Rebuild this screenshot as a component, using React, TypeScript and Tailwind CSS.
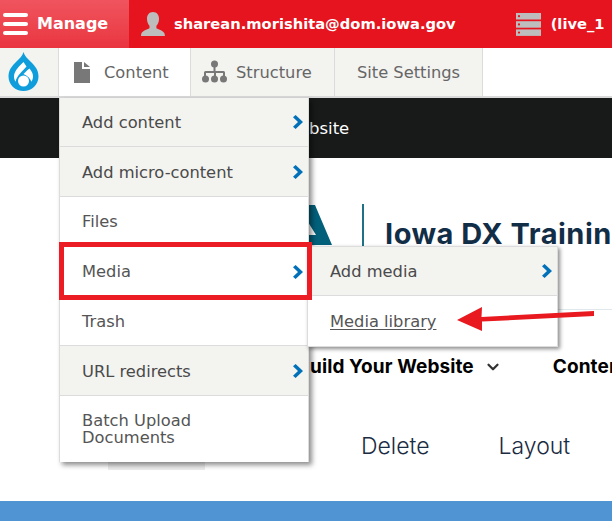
import { ChevronDown } from "lucide-react";

const verdana = "font-['DejaVu_Sans',Verdana,sans-serif]";

function Arrow() {
  return (
    <svg className="absolute right-[5px] top-1/2 -translate-y-1/2" width="10" height="14" viewBox="0 0 10 14" fill="#0071b8">
      <path d="M0 2.200L2.600 0 10 7l-7.400 7L0 11.800 5 7z" />
    </svg>
  );
}

function MenuItem({
  label,
  shaded,
  arrow,
  underline,
  className = "h-[50px]",
}: {
  label: string;
  shaded?: boolean;
  arrow?: boolean;
  underline?: boolean;
  className?: string;
}) {
  return (
    <div
      className={`relative flex items-center border-b border-[#dcdcdc] pl-[22px] pr-10 text-[16.300px] leading-[17px] last:border-b-0 ${className} ${
        shaded ? "bg-[#f3f3f0] text-[#4a4a4a]" : "bg-white text-[#555]"
      } ${underline ? "underline underline-offset-2" : ""}`}
    >
      <span>{label}</span>
      {arrow && <Arrow />}
    </div>
  );
}

function DrupalLogo() {
  return (
    <svg width="31" height="40" viewBox="0 0 31 40">
      <path
        d="M15.500 0c1 4 4 6.500 7.500 10 4 4 7.500 8 7.500 14.500C30.500 33 23.500 39 15.500 39S.5 33 .5 24.500C.5 18 4 14 8 10c3.500-3.500 6.500-6 7.500-10z"
        fill="#0f9edb"
      />
      <path
        d="M15.500 10c-3 3-9.500 8.500-9.500 14.500 0 2 .6 3.800 1.600 5.200 .4-5 7.900-11.700 10.900-15.200 -1-1.600-2-3-3-4.500z"
        fill="#fff"
      />
      <path
        d="M15.500 22c3-3 5-5 6-5.500 2 2.500 3.500 5 3.500 8 0 2-.6 3.800-1.600 5.200 -1-3-4-6-7.900-7.700z"
        fill="#fff"
      />
      <circle cx="15.500" cy="29" r="5.500" fill="#fff" />
    </svg>
  );
}

function PageIcon() {
  return (
    <svg width="16" height="21" viewBox="0 0 16 21" fill="#787878">
      <path d="M0 0h8v7h8v14H0z" />
      <path d="M10 0l6 5h-6z" />
    </svg>
  );
}

function TreeIcon() {
  return (
    <svg width="25" height="24" viewBox="0 0 25 24" fill="#787878">
      <circle cx="12.500" cy="4" r="3.500" />
      <circle cx="3.500" cy="19" r="3.500" />
      <circle cx="12.500" cy="19" r="3.500" />
      <circle cx="21.500" cy="19" r="3.500" />
      <path d="M11.500 6h2v5h8a1.500 1.500 0 0 1 1.500 1.500V17h-2v-4h-7v4h-2v-4H4v4H2v-4.500A1.500 1.500 0 0 1 3.500 11h8z" />
    </svg>
  );
}

function UserIcon() {
  return (
    <svg width="24" height="24" viewBox="0 0 24 24" fill="#bdbdbd">
      <path d="M12 0c3.800 0 6 2.800 6 6.800 0 3-1 5.400-2.600 7v2.400c2.500 1.200 7 2.500 8.100 5.300 .3 1 .4 1.500 .4 2.500H0c0-1 .1-1.500 .4-2.500 1.100-2.800 5.600-4.100 8.100-5.300v-2.400C7 12.200 6 9.800 6 6.800 6 2.800 8.200 0 12 0z" />
    </svg>
  );
}

function ServerIcon() {
  return (
    <svg width="25" height="23" viewBox="0 0 25 23" fill="#bdbdbd">
      <rect width="25" height="6.500" />
      <rect y="8.200" width="25" height="6.500" />
      <rect y="16.400" width="25" height="6.500" />
      <circle cx="3" cy="3.200" r="1.100" fill="#e6141e" />
      <circle cx="3" cy="11.400" r="1.100" fill="#e6141e" />
      <circle cx="3" cy="19.600" r="1.100" fill="#e6141e" />
    </svg>
  );
}

export default function App() {
  return (
    <div className="relative flex h-[521px] w-[612px] flex-col overflow-hidden bg-white font-['Inter',sans-serif]">
      {/* Admin bar */}
      <header className={`flex h-12 shrink-0 items-center whitespace-nowrap bg-[#e6141e] text-[14.700px] font-bold text-white ${verdana}`}>
        <div className="flex h-full w-[129px] shrink-0 items-center gap-[9px] bg-gradient-to-b from-[#f0545e] to-[#e93440] pl-[3px] text-[16px]">
          <div className="flex w-[25px] flex-col gap-[5px]">
            <span className="h-1 rounded-full bg-white" />
            <span className="h-1 rounded-full bg-white" />
            <span className="h-1 rounded-full bg-white" />
          </div>
          <span>Manage</span>
        </div>
        <div className="ml-[12px] flex items-center gap-[9px]">
          <UserIcon />
          <span>sharean.morishita@dom.iowa.gov</span>
        </div>
        <div className="ml-[60px] flex items-center gap-[10px]">
          <ServerIcon />
          <span>(live_1</span>
        </div>
      </header>

      {/* Toolbar tabs */}
      <nav className={`flex h-[50px] shrink-0 border-b-2 border-[#d9d9d9] text-[16.300px] text-[#666] ${verdana}`}>
        <div className="flex w-[59px] items-center border-r border-[#dcdcdc] bg-[#f3f3f0] pl-[8px]">
          <DrupalLogo />
        </div>
        <div className="flex w-[132px] items-center gap-[14px] border-r border-[#dcdcdc] bg-white pl-[15px]">
          <PageIcon />
          <span className="mt-[2px]">Content</span>
        </div>
        <div className="flex w-[144px] items-center gap-[9px] border-r border-[#dcdcdc] bg-[#f3f3f0] pl-[11px]">
          <TreeIcon />
          <span className="mt-[2px]">Structure</span>
        </div>
        <div className="flex w-[148px] items-center justify-center border-r border-[#dcdcdc] bg-[#f3f3f0]">
          <span className="mt-[2px]">Site Settings</span>
        </div>
      </nav>

      {/* Black site strip */}
      <div className={`flex h-[60px] shrink-0 items-center bg-[#181a1a] pl-[309px] pt-[2px] text-[16.500px] text-white ${verdana}`}>
        bsite
      </div>

      {/* Page body */}
      <main className="flex flex-1 flex-col">
        <div className="ml-[308px] mt-[46px] flex h-[106px] items-start border-b border-[#dfe8ec]">
          <svg width="24" height="42" viewBox="0 0 24 42" className="shrink-0">
            <path d="M0 1h7l17 40H0zM0 18v13h8z" fillRule="evenodd" fill="#03607a" />
          </svg>
          <span className="ml-[30px] h-[60px] w-[2px] shrink-0 bg-[#1f7186]" />
          <h1 className="ml-[21px] mt-[13px] whitespace-nowrap text-[29px] leading-[34px] font-bold tracking-[0.5px] text-[#122e47]">
            Iowa DX Training
          </h1>
        </div>
        <div className="mt-[38px] flex h-[38px] items-center whitespace-nowrap pl-[310px] text-[19px] font-bold tracking-[0.1px] text-black">
          <span>uild Your Website</span>
          <ChevronDown className="ml-[10px] shrink-0 text-[#333]" size={18} strokeWidth={3} />
          <span className="ml-[51px]">Content</span>
        </div>
        <div className="mt-[41px] flex h-[43px] items-start whitespace-nowrap pl-[108px] text-[23px] font-light text-[#1a2b42]">
          <div className="h-full w-[97px] shrink-0 bg-[#ececec]" />
          <span className="ml-[156px] mt-[2px]">Delete</span>
          <span className="ml-[69px] mt-[2px]">Layout</span>
        </div>
        <div className="mt-auto h-[20px] bg-[#5094d4]" />
      </main>

      {/* Content dropdown */}
      <div className={`absolute left-[59px] top-[98px] w-[250px] shadow-[3px_3px_5px_rgba(0,0,0,0.45)] ${verdana}`}>
        <div className="border-x border-[#dcdcdc]">
          <MenuItem label="Add content" shaded arrow className="h-[49px] pt-[1px]" />
          <MenuItem label="Add micro-content" shaded arrow className="h-[50px] pt-[2px]" />
          <MenuItem label="Files" />
          <MenuItem label="Media" arrow />
          <MenuItem label="Trash" className="h-[49px]" />
          <MenuItem label="URL redirects" shaded arrow className="h-[50px] pt-[2px]" />
          <MenuItem label="Batch Upload Documents" className="h-[66px]" />
        </div>
      </div>

      {/* Media flyout */}
      <div className={`absolute left-[307px] top-[246px] w-[251px] border border-[#dcdcdc] shadow-[2px_2px_4px_rgba(0,0,0,0.45)] ${verdana}`}>
        <MenuItem label="Add media" shaded arrow className="h-[49px]" />
        <MenuItem label="Media library" underline className="h-[50px] pt-[1px]" />
      </div>

      {/* Annotation: red box and arrow */}
      <div className="absolute left-[59px] top-[242px] h-[58px] w-[253px] border-[5px] border-[#ec1c24]" />
      <svg className="absolute left-[456px] top-[305px]" width="140" height="28" viewBox="0 0 140 28">
        <path d="M1 15L26 2l-.5 10L138 6v5L26 16.500 26 26z" fill="#e8191f" />
      </svg>
    </div>
  );
}
